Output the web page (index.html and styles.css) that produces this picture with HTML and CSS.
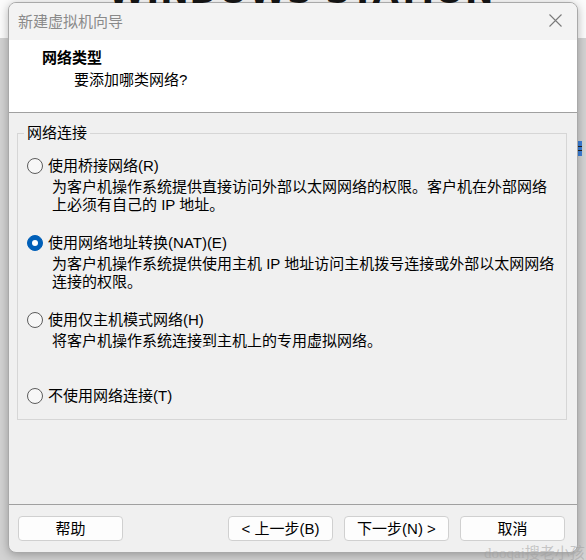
FILE: index.html
```html
<!DOCTYPE html>
<html lang="zh-CN">
<head>
<meta charset="utf-8">
<title>新建虚拟机向导</title>
<link rel="stylesheet" href="styles.css">
</head>
<body>
<div class="bg-title"><div class="bg-title-text">WINDOWS STATION<span class="bg-q">?</span></div></div>
<div class="bg-icon"></div>
<div class="dialog">
  <div class="titlebar">
    <span class="title">新建虚拟机向导</span>
    <span class="close"><svg width="13" height="13" viewBox="0 0 13 13"><path d="M0.5 0.5 L12.5 12.5 M12.5 0.5 L0.5 12.5" stroke="#7a7a7a" stroke-width="1.1" fill="none"/></svg></span>
  </div>
  <div class="header">
    <div class="h-title">网络类型</div>
    <div class="h-sub">要添加哪类网络?</div>
  </div>
  <div class="body">
    <fieldset class="group">
      <legend>网络连接</legend>
      <div class="option">
        <div class="opt-row"><span class="radio"></span><span class="opt-label">使用桥接网络(R)</span></div>
        <div class="opt-desc">为客户机操作系统提供直接访问外部以太网网络的权限。客户机在外部网络<br>上必须有自己的 IP 地址。</div>
      </div>
      <div class="option">
        <div class="opt-row"><span class="radio checked"></span><span class="opt-label">使用网络地址转换(NAT)(E)</span></div>
        <div class="opt-desc">为客户机操作系统提供使用主机 IP 地址访问主机拨号连接或外部以太网网络<br>连接的权限。</div>
      </div>
      <div class="option">
        <div class="opt-row"><span class="radio"></span><span class="opt-label">使用仅主机模式网络(H)</span></div>
        <div class="opt-desc">将客户机操作系统连接到主机上的专用虚拟网络。</div>
      </div>
      <div class="option last">
        <div class="opt-row"><span class="radio"></span><span class="opt-label">不使用网络连接(T)</span></div>
      </div>
    </fieldset>
  </div>
  <div class="footer">
    <button class="btn">帮助</button>
    <button class="btn back">&lt; 上一步(B)</button>
    <button class="btn">下一步(N) &gt;</button>
    <button class="btn">取消</button>
  </div>
</div>
<div class="watermark">dooqai搜老小孩</div>
</body>
</html>
```

FILE: styles.css
```css
html, body {
  margin: 0;
  padding: 0;
}
body {
  width: 586px;
  height: 560px;
  overflow: hidden;
  position: relative;
  background: linear-gradient(#fbfbfb 0, #fbfbfb 38px, #d2d2d2 38px, #d2d2d2 100%);
  font-family: "Liberation Sans", "Noto Sans CJK SC", sans-serif;
  font-size: 15px;
  color: #000;
}

/* background application fragments */
.bg-title {
  position: absolute;
  left: 108px;
  top: 0;
  width: 385px;
  height: 10px;
  overflow: hidden;
  z-index: 2;
}
.bg-title-text {
  margin-top: -26px;
  font-family: "DejaVu Sans", sans-serif;
  font-weight: bold;
  font-size: 34px;
  line-height: 34px;
  letter-spacing: 1px;
  color: #141414;
  white-space: nowrap;
}
.bg-q {
  color: #8a3fc9;
  margin-left: 16px;
}
.bg-icon {
  position: absolute;
  left: 578px;
  top: 141px;
  width: 4px;
  height: 15px;
  background: linear-gradient(#3b7fd8 0, #3b7fd8 5px, #222 5px, #222 6px, #3b7fd8 6px, #3b7fd8 9px, #222 9px, #222 10px, #3b7fd8 10px);
}

/* dialog */
.dialog {
  position: relative;
  z-index: 1;
  box-sizing: border-box;
  width: 570px;
  height: 551px;
  margin: 2px 0 0 8px;
  border: 1px solid #a9a9a9;
  border-radius: 8px;
  overflow: hidden;
  background: #f0f0f0;
  box-shadow: 0 2px 10px rgba(0, 0, 0, 0.28);
  display: flex;
  flex-direction: column;
}
.titlebar {
  flex: none;
  height: 37px;
  background: #f3f3f3;
  display: flex;
  align-items: center;
  justify-content: space-between;
  padding: 0 15px 0 9px;
}
.title {
  color: #8a8a8a;
  line-height: 18px;
}
.close {
  display: flex;
  margin-top: -2px;
}

.header {
  flex: none;
  box-sizing: border-box;
  height: 73px;
  background: #fff;
  border-bottom: 1px solid #a0a0a0;
  padding: 9px 0 0 33px;
}
.h-title {
  font-weight: bold;
  line-height: 18px;
}
.h-sub {
  line-height: 18px;
  margin-top: 4px;
  padding-left: 32px;
}

.body {
  flex: 1;
  padding: 0 10px 0 8px;
  border-bottom: 1px solid #a0a0a0;
}
.group {
  margin: 11px 0 0 0;
  padding: 15px 9px 14px 9px;
  border: 1px solid #d6d6d6;
  min-width: 0;
}
.group legend {
  margin-left: -3px;
  padding: 0 3px;
  line-height: 18px;
}
.option + .option {
  margin-top: 20px;
}
.option.last {
  margin-top: 37px;
}
.opt-row {
  display: flex;
  align-items: center;
  gap: 5px;
  line-height: 18px;
}
.radio {
  flex: none;
  position: relative;
  width: 14px;
  height: 14px;
  border: 1px solid #5c5c5c;
  border-radius: 50%;
  background: #f7f7f7;
}
.radio.checked {
  background: #005fb8;
  border-color: #005fb8;
}
.radio.checked::after {
  content: "";
  position: absolute;
  left: 4px;
  top: 4px;
  width: 6px;
  height: 6px;
  border-radius: 50%;
  background: #fff;
}
.opt-desc {
  margin-top: 3px;
  padding-left: 25px;
  line-height: 18px;
  white-space: nowrap;
}

.footer {
  flex: none;
  box-sizing: border-box;
  height: 47px;
  padding: 11px 12px 0 9px;
  display: flex;
  align-items: flex-start;
  gap: 11px;
}
.btn {
  box-sizing: border-box;
  width: 105px;
  height: 25px;
  padding: 0;
  border: 1px solid #d0d0d0;
  border-radius: 4px;
  background: #fdfdfd;
  font-family: "Liberation Sans", "Noto Sans CJK SC", sans-serif;
  font-size: 15px;
  line-height: 22px;
  color: #000;
}
.btn.back {
  margin-left: auto;
}

.watermark {
  position: absolute;
  left: 484px;
  top: 541px;
  z-index: 3;
  font-family: "Liberation Serif", "Noto Sans CJK SC", serif;
  font-size: 15px;
  color: rgba(160, 160, 160, 0.55);
  white-space: nowrap;
}
```
